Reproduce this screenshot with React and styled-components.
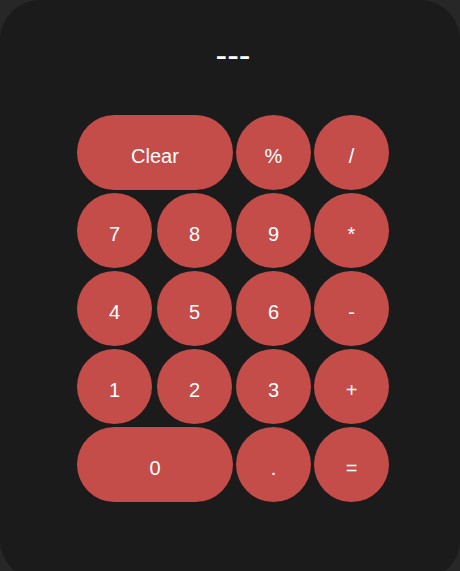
import styled, { createGlobalStyle } from 'styled-components';

const GlobalStyle = createGlobalStyle`
  html, body {
    margin: 0;
    padding: 0;
    background: #272727;
    overflow: hidden;
  }
  * {
    box-sizing: border-box;
  }
`;

const Card = styled.div`
  width: 460px;
  height: 580px;
  background: #1b1b1b;
  border-radius: 40px;
  padding: 35px 0 0 6px;
  display: flex;
  flex-direction: column;
  align-items: center;
  font-family: "Liberation Sans", Arial, sans-serif;
`;

const Display = styled.div`
  color: #ffffff;
  font-size: 35px;
  line-height: 40px;
  height: 40px;
  text-align: center;
  margin-bottom: 40px;
`;

const Keypad = styled.div`
  display: grid;
  grid-template-columns: 80px 79px 78px 75px;
  grid-auto-rows: 75px;
  row-gap: 3px;
`;

const Key = styled.button`
  grid-column: ${({ $wide }) => ($wide ? 'span 2' : 'auto')};
  justify-self: start;
  width: ${({ $wide }) => ($wide ? '156px' : '75px')};
  height: 75px;
  border: none;
  border-radius: 38px;
  background: #c44d4a;
  color: #ffffff;
  font-family: "Liberation Sans", Arial, sans-serif;
  font-size: 20px;
  padding: 7px 0 0;
  display: flex;
  align-items: center;
  justify-content: center;
  cursor: pointer;
`;

const keys = [
  { label: 'Clear', wide: true },
  { label: '%' },
  { label: '/' },
  { label: '7' },
  { label: '8' },
  { label: '9' },
  { label: '*' },
  { label: '4' },
  { label: '5' },
  { label: '6' },
  { label: '-' },
  { label: '1' },
  { label: '2' },
  { label: '3' },
  { label: '+' },
  { label: '0', wide: true },
  { label: '.' },
  { label: '=' },
];

const App = () => {
  return (
    <>
      <GlobalStyle />
      <Card>
        <Display>---</Display>
        <Keypad>
          {keys.map(k => (
            <Key key={k.label} $wide={k.wide}>{k.label}</Key>
          ))}
        </Keypad>
      </Card>
    </>
  );
};

export default App;
